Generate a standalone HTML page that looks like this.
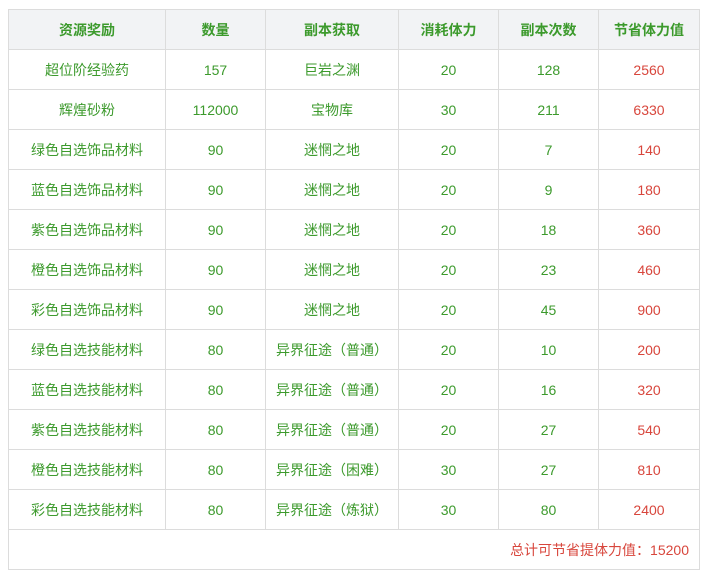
<!DOCTYPE html><html><head><meta charset="utf-8"><style>
body{margin:0;background:#fff;font-family:"Liberation Sans","Noto Sans CJK SC",sans-serif;font-size:14px}
table{position:absolute;left:8px;top:9px;border-collapse:collapse;width:691px;table-layout:fixed}
td,th{border:1px solid #dcdcdc;height:39px;padding:0;text-align:center;color:#3c9a2c;font-weight:normal}
th{background:#f2f3f5;font-weight:bold}
td.r{color:#d8463c}
td.f{text-align:right;padding-right:10px;color:#d8463c}
</style></head><body>
<table>
<colgroup><col style="width:157px"><col style="width:100px"><col style="width:133px"><col style="width:100px"><col style="width:100px"><col style="width:101px"></colgroup>
<tr><th>资源奖励</th><th>数量</th><th>副本获取</th><th>消耗体力</th><th>副本次数</th><th>节省体力值</th></tr>
<tr><td>超位阶经验药</td><td>157</td><td>巨岩之渊</td><td>20</td><td>128</td><td class="r">2560</td></tr>
<tr><td>辉煌砂粉</td><td>112000</td><td>宝物库</td><td>30</td><td>211</td><td class="r">6330</td></tr>
<tr><td>绿色自选饰品材料</td><td>90</td><td>迷惘之地</td><td>20</td><td>7</td><td class="r">140</td></tr>
<tr><td>蓝色自选饰品材料</td><td>90</td><td>迷惘之地</td><td>20</td><td>9</td><td class="r">180</td></tr>
<tr><td>紫色自选饰品材料</td><td>90</td><td>迷惘之地</td><td>20</td><td>18</td><td class="r">360</td></tr>
<tr><td>橙色自选饰品材料</td><td>90</td><td>迷惘之地</td><td>20</td><td>23</td><td class="r">460</td></tr>
<tr><td>彩色自选饰品材料</td><td>90</td><td>迷惘之地</td><td>20</td><td>45</td><td class="r">900</td></tr>
<tr><td>绿色自选技能材料</td><td>80</td><td>异界征途（普通）</td><td>20</td><td>10</td><td class="r">200</td></tr>
<tr><td>蓝色自选技能材料</td><td>80</td><td>异界征途（普通）</td><td>20</td><td>16</td><td class="r">320</td></tr>
<tr><td>紫色自选技能材料</td><td>80</td><td>异界征途（普通）</td><td>20</td><td>27</td><td class="r">540</td></tr>
<tr><td>橙色自选技能材料</td><td>80</td><td>异界征途（困难）</td><td>30</td><td>27</td><td class="r">810</td></tr>
<tr><td>彩色自选技能材料</td><td>80</td><td>异界征途（炼狱）</td><td>30</td><td>80</td><td class="r">2400</td></tr>
<tr><td colspan="6" class="f">总计可节省提体力值：15200</td></tr>
</table>
</body></html>
